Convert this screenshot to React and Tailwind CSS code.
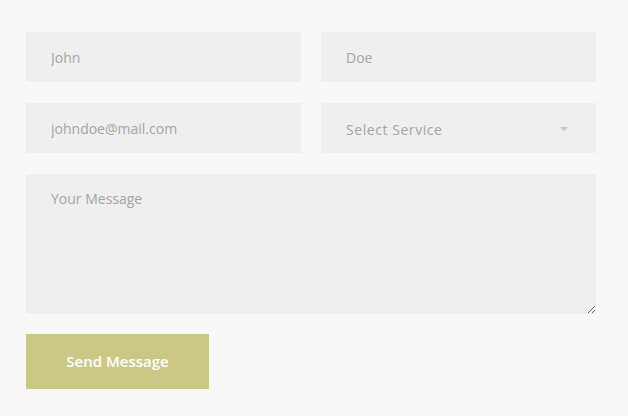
export default function App() {
  const field =
    "h-[50px] w-full bg-[#efefef] px-[25px] text-[14px] text-[#777] placeholder:text-[#a4a4a4] outline-none";

  return (
    <div
      className="min-h-[416px] w-[628px] bg-[#f8f8f8] px-[26px] pt-[32px]"
      style={{ fontFamily: "'Open Sans', 'Liberation Sans', sans-serif" }}
    >
      <form className="flex w-[570px] flex-col gap-[21px]">
        <div className="grid grid-cols-2 gap-[20px]">
          <input className={field} placeholder="John" />
          <input className={field} placeholder="Doe" />
        </div>

        <div className="grid grid-cols-2 gap-[20px]">
          <input className={field} placeholder="johndoe@mail.com" />
          <div className="relative">
            <select className="h-[50px] w-full appearance-none bg-[#efefef] px-[25px] pt-[3px] text-[14px] tracking-[0.04em] text-[#a4a4a4] outline-none">
              <option>Select Service</option>
            </select>
            <span className="pointer-events-none absolute right-[28px] top-[24px] h-0 w-0 border-x-[4px] border-t-[4px] border-x-transparent border-t-[#c4c4c4]" />
          </div>
        </div>

        <textarea
          className="h-[140px] w-full bg-[#efefef] px-[25px] py-[14px] text-[14px] text-[#777] placeholder:text-[#a4a4a4] outline-none"
          placeholder="Your Message"
        />

        <button
          type="button"
          className="-mt-px h-[55px] w-[183px] bg-[#cbc885] text-[15px] font-semibold text-white"
        >
          Send Message
        </button>
      </form>
    </div>
  );
}
